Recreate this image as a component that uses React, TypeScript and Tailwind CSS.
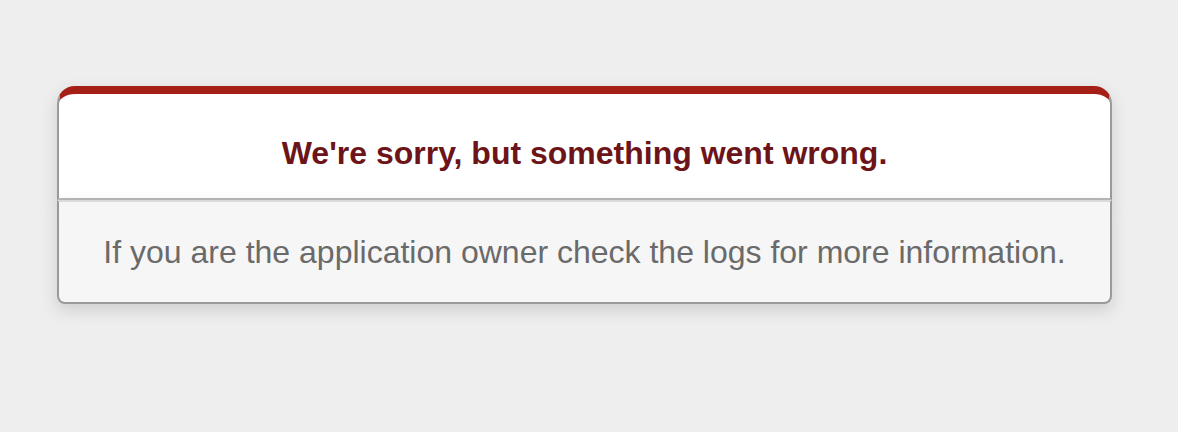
import React from 'react';

export default function App() {
  return (
    <div className="min-h-screen bg-[#eeeeee] pt-[86px] pl-[57px] text-center font-['Liberation_Sans',Arial,sans-serif]">
      {/* Error dialog */}
      <div className="w-[1055px]">
        <div className="rounded-t-[18px] border-t-8 border-x-2 border-b-2 border-t-[#a51f17] border-x-[#9a9a9a] border-b-[#b8b8b8] bg-white px-[12%] pt-[14px] shadow-[0_6px_16px_rgba(50,50,50,0.17)]">
          <h1 className="my-[21px] text-[32px] font-bold leading-[48px] text-[#6c1418]">
            We're sorry, but something went wrong.
          </h1>
        </div>
        <p className="rounded-b-[8px] border-2 border-t-[#dadada] border-x-[#9a9a9a] border-b-[#9a9a9a] bg-[#f6f6f6] px-8 py-8 text-[32px] leading-[36px] text-[#6a6a6a] shadow-[0_6px_16px_rgba(50,50,50,0.17)]">
          If you are the application owner check the logs for more information.
        </p>
      </div>
    </div>
  );
}
